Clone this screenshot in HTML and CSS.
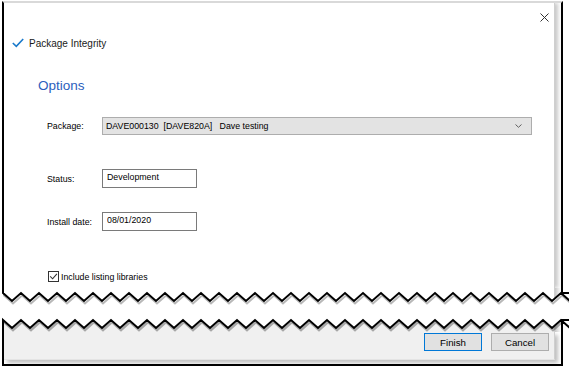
FILE: index.html
```html
<!DOCTYPE html>
<html lang="en">
<head>
    <meta charset="UTF-8">
    <meta name="viewport" content="width=device-width, initial-scale=1.0">
    <title>Package Integrity - Options</title>
    <link rel="stylesheet" href="styles.css">
</head>
<body>
<div class="shot">

    <!-- upper part of the dialog -->
    <div class="piece piece-top">
        <div class="window">
            <div class="titlebar">
                <svg class="close" width="9" height="9" viewBox="0 0 9 9">
                    <path d="M0.5,0.5 L8.5,8.5 M8.5,0.5 L0.5,8.5" stroke="#333" stroke-width="1" fill="none"/>
                </svg>
            </div>

            <div class="step">
                <svg class="tick" width="12" height="10" viewBox="0 0 12 10">
                    <path d="M0.8,5 L4.3,8.4 L11.2,1" stroke="#1a7acb" stroke-width="1.6" fill="none"/>
                </svg>
                <span>Package Integrity</span>
            </div>

            <h2 class="heading">Options</h2>

            <div class="form">
                <div class="row row-package">
                    <label>Package:</label>
                    <div class="select">
                        <span>DAVE000130&nbsp;&nbsp;[DAVE820A]&nbsp;&nbsp;&nbsp;Dave testing</span>
                        <svg width="7" height="4" viewBox="0 0 7 4">
                            <path d="M0.5,0.5 L3.5,3.3 L6.5,0.5" stroke="#606060" stroke-width="1" fill="none"/>
                        </svg>
                    </div>
                </div>

                <div class="row row-status">
                    <label>Status:</label>
                    <input class="field" type="text" value="Development">
                </div>

                <div class="row row-date">
                    <label>Install date:</label>
                    <input class="field" type="text" value="08/01/2020">
                </div>

                <div class="row row-check">
                    <div class="checkbox">
                        <svg width="9" height="9" viewBox="0 0 9 9">
                            <path d="M1.2,4.4 L3.6,6.8 L7.9,1.8" stroke="#333" stroke-width="1.1" fill="none"/>
                        </svg>
                    </div>
                    <span>Include listing libraries</span>
                </div>
            </div>
        </div>
    </div>

    <!-- torn edge under the upper part -->
    <svg class="tear" width="569" height="18" viewBox="0 0 569 18">
        <defs>
            <clipPath id="upper">
                <path d="M3,0 V5 l9 8 9 -8 9 8 9 -8 9 8 9 -8 9 8 9 -8 9 8 9 -8 9 8 9 -8 9 8 9 -8 9 8 9 -8 9 8 9 -8 9 8 9 -8 9 8 9 -8 9 8 9 -8 9 8 9 -8 9 8 9 -8 9 8 9 -8 9 8 9 -8 9 8 9 -8 9 8 9 -8 9 8 9 -8 9 8 9 -8 9 8 9 -8 9 8 9 -8 9 8 9 -8 9 8 9 -8 9 8 9 -8 9 8 9 -8 9 8 9 -8 9 8 9 -8 9 8 9 -8 9 8 9 -8 9 8 9 -8 9 8 9 -8 9 8 9 -8 L562,5 V0 Z"/>
            </clipPath>
            <linearGradient id="side" x1="0" x2="1" y1="0" y2="0">
                <stop offset="0" stop-color="#000" stop-opacity="0.22"/>
                <stop offset="1" stop-color="#000" stop-opacity="0"/>
            </linearGradient>
        </defs>
        <path d="M4,1 V6 l9 8 9 -8 9 8 9 -8 9 8 9 -8 9 8 9 -8 9 8 9 -8 9 8 9 -8 9 8 9 -8 9 8 9 -8 9 8 9 -8 9 8 9 -8 9 8 9 -8 9 8 9 -8 9 8 9 -8 9 8 9 -8 9 8 9 -8 9 8 9 -8 9 8 9 -8 9 8 9 -8 9 8 9 -8 9 8 9 -8 9 8 9 -8 9 8 9 -8 9 8 9 -8 9 8 9 -8 9 8 9 -8 9 8 9 -8 9 8 9 -8 9 8 9 -8 9 8 9 -8 9 8 9 -8 9 8 9 -8 9 8 9 -8" transform="translate(0,1.5)" stroke="#000" stroke-opacity="0.28" stroke-width="2" fill="none"/>
        <path d="M3,0 V5 l9 8 9 -8 9 8 9 -8 9 8 9 -8 9 8 9 -8 9 8 9 -8 9 8 9 -8 9 8 9 -8 9 8 9 -8 9 8 9 -8 9 8 9 -8 9 8 9 -8 9 8 9 -8 9 8 9 -8 9 8 9 -8 9 8 9 -8 9 8 9 -8 9 8 9 -8 9 8 9 -8 9 8 9 -8 9 8 9 -8 9 8 9 -8 9 8 9 -8 9 8 9 -8 9 8 9 -8 9 8 9 -8 9 8 9 -8 9 8 9 -8 9 8 9 -8 9 8 9 -8 9 8 9 -8 9 8 9 -8 9 8 9 -8 9 8 9 -8 L562,5 V0 Z" fill="#fff"/>
        <g clip-path="url(#upper)">
            <rect x="554" y="0" width="1" height="18" fill="#cfcfcf"/>
            <rect x="555" y="0" width="6" height="18" fill="url(#side)"/>
        </g>
        <path d="M3,0 V5 l9 8 9 -8 9 8 9 -8 9 8 9 -8 9 8 9 -8 9 8 9 -8 9 8 9 -8 9 8 9 -8 9 8 9 -8 9 8 9 -8 9 8 9 -8 9 8 9 -8 9 8 9 -8 9 8 9 -8 9 8 9 -8 9 8 9 -8 9 8 9 -8 9 8 9 -8 9 8 9 -8 9 8 9 -8 9 8 9 -8 9 8 9 -8 9 8 9 -8 9 8 9 -8 9 8 9 -8 9 8 9 -8 9 8 9 -8 9 8 9 -8 9 8 9 -8 9 8 9 -8 9 8 9 -8 9 8 9 -8 9 8 9 -8 9 8 9 -8 L562,5 V0" stroke="#000" stroke-width="2" fill="none"/>
    </svg>

    <div class="gap"></div>

    <!-- torn edge over the lower part -->
    <svg class="tear" width="569" height="16" viewBox="0 0 569 16">
        <defs>
            <clipPath id="lower">
                <path d="M3,16 V4 l9 8 9 -8 9 8 9 -8 9 8 9 -8 9 8 9 -8 9 8 9 -8 9 8 9 -8 9 8 9 -8 9 8 9 -8 9 8 9 -8 9 8 9 -8 9 8 9 -8 9 8 9 -8 9 8 9 -8 9 8 9 -8 9 8 9 -8 9 8 9 -8 9 8 9 -8 9 8 9 -8 9 8 9 -8 9 8 9 -8 9 8 9 -8 9 8 9 -8 9 8 9 -8 9 8 9 -8 9 8 9 -8 9 8 9 -8 9 8 9 -8 9 8 9 -8 9 8 9 -8 9 8 9 -8 9 8 9 -8 9 8 9 -8 9 8 9 -8 L562,4 V16 Z"/>
            </clipPath>
        </defs>
        <g clip-path="url(#lower)">
            <rect x="0" y="0" width="569" height="16" fill="#fff"/>
            <rect x="4" y="0" width="550" height="16" fill="#f0f0f0"/>
            <rect x="554" y="0" width="1" height="16" fill="#cfcfcf"/>
            <rect x="555" y="0" width="6" height="16" fill="url(#side)"/>
            <path d="M3,4 l9 8 9 -8 9 8 9 -8 9 8 9 -8 9 8 9 -8 9 8 9 -8 9 8 9 -8 9 8 9 -8 9 8 9 -8 9 8 9 -8 9 8 9 -8 9 8 9 -8 9 8 9 -8 9 8 9 -8 9 8 9 -8 9 8 9 -8 9 8 9 -8 9 8 9 -8 9 8 9 -8 9 8 9 -8 9 8 9 -8 9 8 9 -8 9 8 9 -8 9 8 9 -8 9 8 9 -8 9 8 9 -8 9 8 9 -8 9 8 9 -8 9 8 9 -8 9 8 9 -8 9 8 9 -8 9 8 9 -8 9 8 9 -8 9 8 9 -8 9 8 9 -8" transform="translate(1,2)" stroke="#000" stroke-opacity="0.3" stroke-width="2.5" fill="none"/>
        </g>
        <path d="M3,16 V4 l9 8 9 -8 9 8 9 -8 9 8 9 -8 9 8 9 -8 9 8 9 -8 9 8 9 -8 9 8 9 -8 9 8 9 -8 9 8 9 -8 9 8 9 -8 9 8 9 -8 9 8 9 -8 9 8 9 -8 9 8 9 -8 9 8 9 -8 9 8 9 -8 9 8 9 -8 9 8 9 -8 9 8 9 -8 9 8 9 -8 9 8 9 -8 9 8 9 -8 9 8 9 -8 9 8 9 -8 9 8 9 -8 9 8 9 -8 9 8 9 -8 9 8 9 -8 9 8 9 -8 9 8 9 -8 9 8 9 -8 9 8 9 -8 9 8 9 -8 L562,4 V16" stroke="#000" stroke-width="2" fill="none"/>
    </svg>

    <!-- lower part of the dialog -->
    <div class="piece piece-bottom">
        <div class="window">
            <div class="footer">
                <button class="btn btn-default">Finish</button>
                <button class="btn">Cancel</button>
            </div>
        </div>
    </div>

</div>
</body>
</html>
```

FILE: styles.css
```css
* {
    box-sizing: border-box;
}

body {
    margin: 0;
    background: #fff;
    color: #000;
    font-family: "Liberation Sans", Arial, sans-serif;
}

.shot {
    width: 569px;
    height: 369px;
    padding-top: 1px;
    overflow: hidden;
}

.tear {
    display: block;
}

.gap {
    height: 10px;
}

/* the two pieces of the dialog */
.piece {
    margin-left: 2px;
    width: 561px;
    border: 2px solid #000;
    background: #fff;
    overflow: hidden;
}
.piece-top {
    border-top: 2px solid #d9d9d9;
    border-bottom: 0;
}
.piece-bottom {
    border-top: 0;
    padding-bottom: 4px;
}

.window {
    width: 551px;
    border-right: 1px solid #cfcfcf;
    box-shadow: 3px 0 4px rgba(0, 0, 0, 0.22);
}
.piece-top .window {
    height: 285px;
    background: #fff;
}
.piece-bottom .window {
    height: 28px;
    background: #f0f0f0;
    border-bottom: 1px solid #e4e4e4;
    box-shadow: 3px 3px 4px rgba(0, 0, 0, 0.25);
}

/* title and step */
.titlebar {
    height: 28px;
    display: flex;
    justify-content: flex-end;
    align-items: center;
    padding-right: 5px;
}

.step {
    height: 24px;
    display: flex;
    align-items: center;
    padding-left: 8px;
    font-family: "Segoe UI", "Liberation Sans", Arial, sans-serif;
    font-size: 10px;
    color: #1a1a1a;
}
.tick {
    margin-right: 5px;
}

.heading {
    margin: 21px 0 0 0;
    padding-left: 34px;
    height: 20px;
    line-height: 20px;
    font-family: "Segoe UI", "Liberation Sans", Arial, sans-serif;
    font-size: 13.5px;
    font-weight: normal;
    color: #2b5ebd;
}

/* form */
.form {
    padding-left: 43px;
    font-size: 8.8px;
}
.row {
    display: flex;
    align-items: center;
}
.row label {
    width: 55px;
}
.row-package {
    margin-top: 21px;
}
.row-status {
    margin-top: 34px;
}
.row-date {
    margin-top: 24px;
}
.row-check {
    margin-top: 40px;
    height: 11px;
}

.select {
    width: 430px;
    height: 18px;
    border: 1px solid #adadad;
    background: #e3e3e3;
    display: flex;
    align-items: center;
    justify-content: space-between;
    padding: 0 9px 0 3px;
}

.field {
    width: 95px;
    height: 19px;
    margin: 0;
    border: 1px solid #7a7a7a;
    border-radius: 0;
    padding: 0 4px 3px 4px;
    font-family: "Liberation Sans", Arial, sans-serif;
    font-size: 8.8px;
    color: #000;
    background: #fff;
    outline: none;
}

.checkbox {
    width: 11px;
    height: 11px;
    margin-left: 1px;
    margin-right: 2px;
    border: 1px solid #333;
    background: #fff;
    display: flex;
    align-items: center;
    justify-content: center;
}

/* buttons */
.footer {
    display: flex;
    justify-content: flex-end;
    gap: 9px;
    padding: 1px 5px 0 0;
}
.btn {
    width: 58px;
    height: 18px;
    margin: 0;
    padding: 0;
    border: 1px solid #adadad;
    border-radius: 0;
    background: #e1e1e1;
    font-family: "Segoe UI", "Liberation Sans", Arial, sans-serif;
    font-size: 9.7px;
    color: #000;
}
.btn-default {
    border-color: #0078d7;
}
```
